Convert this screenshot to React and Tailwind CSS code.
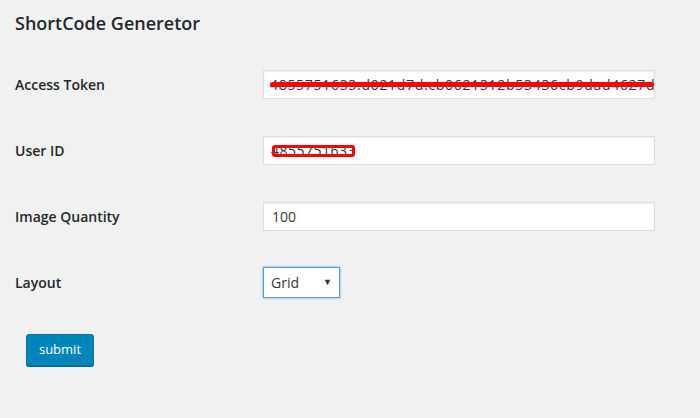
import React from "react";

const font = { fontFamily: '"Open Sans", "Noto Sans", Arial, sans-serif' };

function Row({ label, children }) {
  return (
    <div className="flex h-[66px] items-center">
      <div className="w-[248px] text-[14px] font-semibold text-[#23282d]">
        {label}
      </div>
      {children}
    </div>
  );
}

export default function App() {
  return (
    <div
      className="min-h-[418px] w-full bg-[#f1f1f1] pl-[15px] pt-[11px]"
      style={font}
    >
      <h2 className="h-[40px] text-[18px] font-semibold leading-[24px] text-[#23282d]">
        ShortCode Generetor
      </h2>

      <Row label="Access Token">
        <div className="relative flex h-[29px] w-[392px] items-center overflow-hidden border border-[#ddd] bg-white pl-[6px] shadow-[inset_0_1px_2px_rgba(0,0,0,0.07)]">
          <span className="whitespace-nowrap text-[14px] tracking-[0.7px] text-[#32373c]">
            4855751633.d021d7d.cb0621312b53436cb9dad4627d4
          </span>
          <div className="absolute left-[6px] right-0 top-[11px] h-[5px] rounded-full bg-[#f00]" />
        </div>
      </Row>

      <Row label="User ID">
        <div className="relative flex h-[29px] w-[392px] items-center overflow-hidden border border-[#ddd] bg-white pl-[7px] shadow-[inset_0_1px_2px_rgba(0,0,0,0.07)]">
          <span className="whitespace-nowrap text-[14px] tracking-[0.5px] text-[#32373c]">
            4855751633
          </span>
          <div className="absolute left-[8px] top-[8px] h-[12px] w-[83px] rounded-[3px] border-[3px] border-[#f00]" />
        </div>
      </Row>

      <Row label="Image Quantity">
        <div className="flex h-[29px] w-[392px] items-center border border-[#ddd] bg-white pl-[8px] text-[14px] text-[#32373c] shadow-[inset_0_1px_2px_rgba(0,0,0,0.07)]">
          100
        </div>
      </Row>

      <Row label="Layout">
        <div className="flex h-[31px] w-[77px] items-center justify-between border border-[#5b9dd9] bg-white pl-[7px] pr-[7px] text-[14px] text-[#32373c] shadow-[0_0_2px_rgba(30,140,190,0.8)]">
          <span>Grid</span>
          <span className="text-[9px] text-[#333]">▼</span>
        </div>
      </Row>

      <div className="pl-[11px] pt-[19px]">
        <button className="h-[32px] w-[68px] rounded-[3px] border border-[#0073aa] bg-[#0085ba] text-[13px] text-white shadow-[0_1px_0_#006799]">
          submit
        </button>
      </div>
    </div>
  );
}
